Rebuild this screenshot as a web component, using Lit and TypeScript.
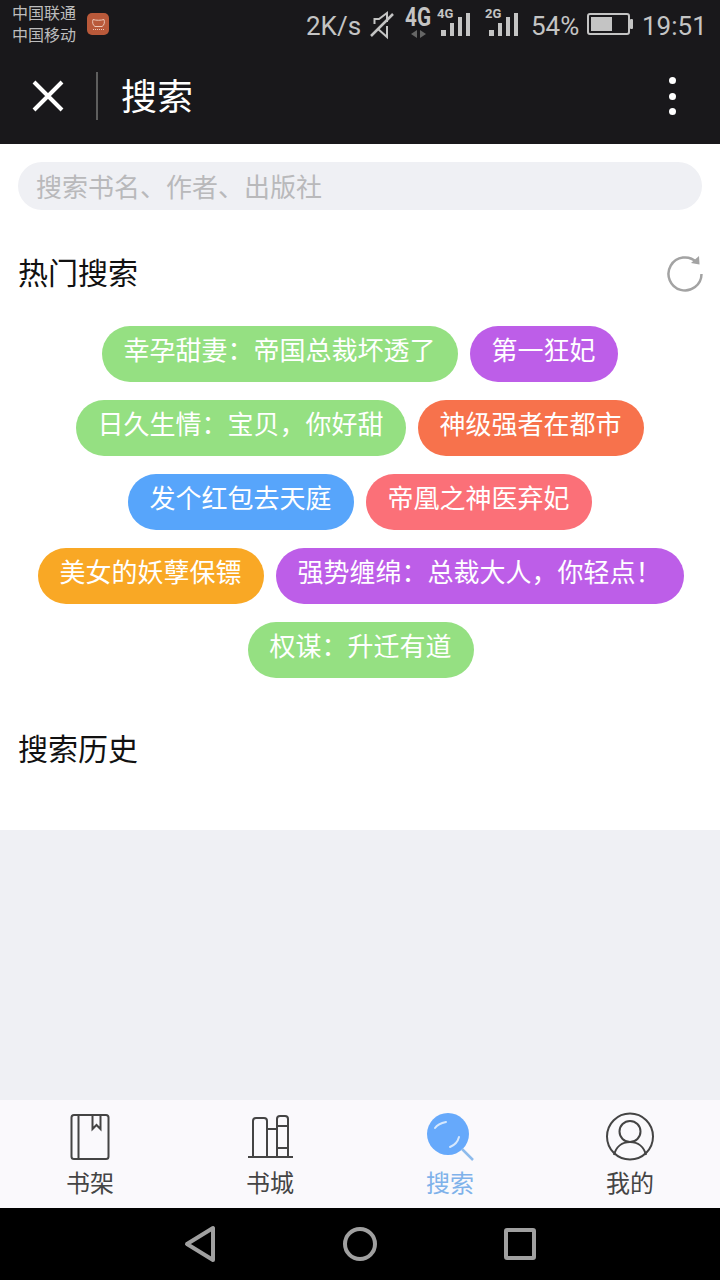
import { LitElement, html, css, svg } from "lit";
import { customElement } from "lit/decorators.js";

const TAGS: [string, string, boolean][] = [
  ["幸孕甜妻：帝国总裁坏透了", "#95e082", false],
  ["第一狂妃", "#bd5ee8", false],
  ["日久生情：宝贝，你好甜", "#95e082", false],
  ["神级强者在都市", "#f7724c", false],
  ["发个红包去天庭", "#57a5fb", false],
  ["帝凰之神医弃妃", "#fb7078", false],
  ["美女的妖孽保镖", "#f9a825", true],
  ["强势缠绵：总裁大人，你轻点！", "#bd5ee8", true],
  ["权谋：升迁有道", "#95e082", true],
];

@customElement("app-root")
export class AppRoot extends LitElement {
  static styles = css`
    :host {
      display: flex;
      flex-direction: column;
      width: 720px;
      height: 1280px;
      background: #eff0f4;
      font-family: Roboto, "Noto Sans CJK SC", sans-serif;
      overflow: hidden;
    }
    .status {
      height: 48px;
      flex: none;
      background: #19181b;
      color: #c4c4c4;
      display: flex;
      align-items: center;
      padding-left: 12px;
      box-sizing: border-box;
    }
    .carriers {
      font-size: 16px;
      line-height: 22px;
      color: #bdbdbd;
      width: 64px;
      margin-top: 2px;
    }
    .carriers div { white-space: nowrap; }
    .appicon {
      width: 22px;
      height: 22px;
      margin-left: 11px;
      border-radius: 5px;
      background: #b9593a;
      display: flex;
      align-items: center;
      justify-content: center;
    }
    .status-right {
      margin-left: 197px;
      display: flex;
      align-items: center;
      font-size: 26px;
    }
    .status-right span { margin-top: 3px; white-space: nowrap; }
    .speed { width: 64px; }
    .status-right svg { display: block; flex: none; }
    .net { margin-left: 11px; }
    .sig2 { margin-left: 14px; }
    .pct { margin-left: 12px; width: 56px; }
    .time { margin-left: 9px; }
    .header {
      height: 96px;
      flex: none;
      background: #19181b;
      display: flex;
      align-items: center;
      color: #fff;
    }
    .close { margin-left: 32px; display: block; }
    .divider {
      width: 2px;
      height: 48px;
      background: #5e5e5e;
      margin-left: 32px;
    }
    .title {
      font-size: 36px;
      line-height: 48px;
      margin-left: 23px;
      margin-top: 4px;
    }
    .more {
      margin-left: auto;
      margin-right: 44px;
      display: flex;
      flex-direction: column;
      gap: 8.5px;
    }
    .more i {
      width: 7px;
      height: 7px;
      border-radius: 50%;
      background: #fff;
      display: block;
    }
    .content {
      background: #fff;
      height: 686px;
      flex: none;
      padding: 18px 18px 0;
      box-sizing: border-box;
    }
    .search {
      height: 48px;
      border-radius: 24px;
      background: #eff0f4;
      color: #b9b9bb;
      font-size: 26px;
      line-height: 52px;
      padding-left: 18px;
    }
    .section-head {
      display: flex;
      align-items: center;
      justify-content: space-between;
      font-size: 30px;
      line-height: 40px;
      color: #111;
      margin-top: 44px;
    }
    .refresh { display: block; margin-right: -2px; }
    .tags {
      display: flex;
      flex-wrap: wrap;
      justify-content: center;
      gap: 18px 12px;
      margin-top: 32px;
    }
    .tag {
      height: 56px;
      box-sizing: border-box;
      border-radius: 28px;
      padding: 0 22.5px 5px 21.5px;
      font-size: 26px;
      line-height: 51px;
      color: #fff;
      white-space: nowrap;
    }
    .tag.nudge { margin-left: 1px; margin-right: -1px; }
    .history { margin-top: 52px; }
    .spacer { flex: 1; }
    .tabbar {
      height: 108px;
      flex: none;
      background: #faf9fc;
      display: grid;
      grid-template-columns: repeat(4, 180px);
    }
    .tab {
      display: flex;
      flex-direction: column;
      align-items: center;
      color: #444;
      font-size: 24px;
      line-height: 32px;
    }
    .tab.active { color: #7fb2ea; }
    .tab svg { display: block; margin-top: 12px; margin-bottom: 6px; }
    .nav {
      height: 72px;
      flex: none;
      background: #000;
      display: grid;
      grid-template-columns: repeat(3, 160px);
      justify-content: center;
      justify-items: center;
      align-items: center;
    }
    .nav svg { display: block; }
  `;

  private signal(label: string) {
    return svg`
      <text x="0" y="18" font-size="13" font-weight="700" font-family="Roboto, sans-serif" fill="#c4c4c4">${label}</text>
      <rect x="4" y="30" width="5" height="6" fill="#c4c4c4"/>
      <rect x="13" y="23" width="4" height="13" fill="#c4c4c4"/>
      <rect x="21" y="17" width="4" height="19" fill="#c4c4c4"/>
      <rect x="29" y="13" width="4" height="23" fill="#c4c4c4"/>`;
  }

  render() {
    return html`
      <div class="status">
        <div class="carriers"><div>中国联通</div><div>中国移动</div></div>
        <div class="appicon">
          <svg width="15" height="13" viewBox="0 0 15 13" fill="none" stroke="#ecc6b6" stroke-width="1">
            <path d="M2 1.5c3 1 8 1 11 0c1 3 0 6-2 7H4C2 7.500 1 4.500 2 1.500Z"/>
            <path d="M2 11.500h11" stroke-dasharray="1 1"/>
          </svg>
        </div>
        <div class="status-right">
          <span class="speed">2K/s</span>
          <svg width="24" height="48" viewBox="0 0 24 48" fill="none" stroke="#c4c4c4">
            <path d="M4.500 24V19H9l8-6v9M8 29l9 8V26" stroke-width="2"/>
            <path d="M1 36L23 14" stroke-width="2.500"/>
          </svg>
          <svg class="net" width="32" height="48" viewBox="0 0 32 48">
            <text x="0" y="26" font-size="25" font-weight="700" textLength="26" lengthAdjust="spacingAndGlyphs" font-family="Roboto, sans-serif" fill="#c4c4c4">4G</text>
            <path d="M12 30v8l-6-4zM15 30v8l6-4z" fill="#666"/>
          </svg>
          <svg width="34" height="48" viewBox="0 0 34 48">${this.signal("4G")}</svg>
          <svg class="sig2" width="34" height="48" viewBox="0 0 34 48">${this.signal("2G")}</svg>
          <span class="pct">54%</span>
          <svg width="46" height="48" viewBox="0 0 46 48">
            <rect x="1" y="14" width="41" height="20" rx="2" fill="none" stroke="#c4c4c4" stroke-width="2"/>
            <rect x="4" y="17" width="21" height="14" fill="#c4c4c4"/>
            <rect x="43" y="19" width="3" height="10" rx="1" fill="#c4c4c4"/>
          </svg>
          <span class="time">19:51</span>
        </div>
      </div>

      <div class="header">
        <svg class="close" width="32" height="32" viewBox="0 0 32 32" stroke="#fff" stroke-width="4" fill="none">
          <path d="M2 2L30 30M30 2L2 30"/>
        </svg>
        <div class="divider"></div>
        <div class="title">搜索</div>
        <div class="more"><i></i><i></i><i></i></div>
      </div>

      <div class="content">
        <div class="search">搜索书名、作者、出版社</div>
        <div class="section-head">
          <span>热门搜索</span>
          <svg class="refresh" width="38" height="38" viewBox="0 0 38 38" fill="none" stroke="#a3a3a3" stroke-width="2.500">
            <path d="M35.500 19A16.500 16.500 0 1 1 30.700 7.300"/>
            <path d="M33 1l.5 8.500L25 8z" fill="#a3a3a3" stroke="none"/>
          </svg>
        </div>
        <div class="tags">
          ${TAGS.map(
            ([t, c, nudge]) =>
              html`<div class="tag ${nudge ? "nudge" : ""}" style="background:${c}">${t}</div>`
          )}
        </div>
        <div class="section-head history"><span>搜索历史</span></div>
      </div>

      <div class="spacer"></div>

      <div class="tabbar">
        <div class="tab">
          <svg width="48" height="50" viewBox="0 0 48 50" fill="none" stroke="#444" stroke-width="2">
            <rect x="5.500" y="3" width="37" height="44" rx="2.500"/>
            <path d="M12.500 3v44M26.500 3v14l4-4 4 4V3"/>
          </svg>
          书架
        </div>
        <div class="tab">
          <svg width="48" height="50" viewBox="0 0 48 50" fill="none" stroke="#444" stroke-width="2">
            <path d="M2 45h45"/>
            <path d="M7 45V9a3 3 0 0 1 3-3h8a3 3 0 0 1 3 3v36M21 17h10M31 45V7a3 3 0 0 1 3-3h5a3 3 0 0 1 3 3v38M31 14h11M31 36h11"/>
          </svg>
          书城
        </div>
        <div class="tab active">
          <svg width="48" height="50" viewBox="0 0 48 50" fill="none">
            <circle cx="22" cy="22" r="21" fill="#66a9fb"/>
            <path d="M36 37L47 48" stroke="#8dbbec" stroke-width="2.500"/>
            <path d="M9 16c2-3 6-5 11-6M33 25c-1 4-4 8-9 10" stroke="#d6e8fd" stroke-width="2" stroke-linecap="round"/>
          </svg>
          搜索
        </div>
        <div class="tab">
          <svg width="48" height="50" viewBox="0 0 48 50" fill="none" stroke="#444" stroke-width="2">
            <circle cx="24" cy="24.500" r="23"/>
            <circle cx="24" cy="19.500" r="10.500"/>
            <path d="M8 43c2-8 8-13 16-13s14 5 16 13"/>
          </svg>
          我的
        </div>
      </div>

      <div class="nav">
        <svg width="34" height="38" viewBox="0 0 34 38" fill="none" stroke="#a0a0a0" stroke-width="4" stroke-linejoin="round">
          <path d="M30 3v32L4 19z"/>
        </svg>
        <svg width="36" height="36" viewBox="0 0 36 36" fill="none" stroke="#a0a0a0" stroke-width="4">
          <circle cx="18" cy="18" r="15"/>
        </svg>
        <svg width="32" height="32" viewBox="0 0 32 32" fill="none" stroke="#a0a0a0" stroke-width="4" stroke-linejoin="round">
          <rect x="2" y="2" width="28" height="28" rx="1"/>
        </svg>
      </div>
    `;
  }
}
